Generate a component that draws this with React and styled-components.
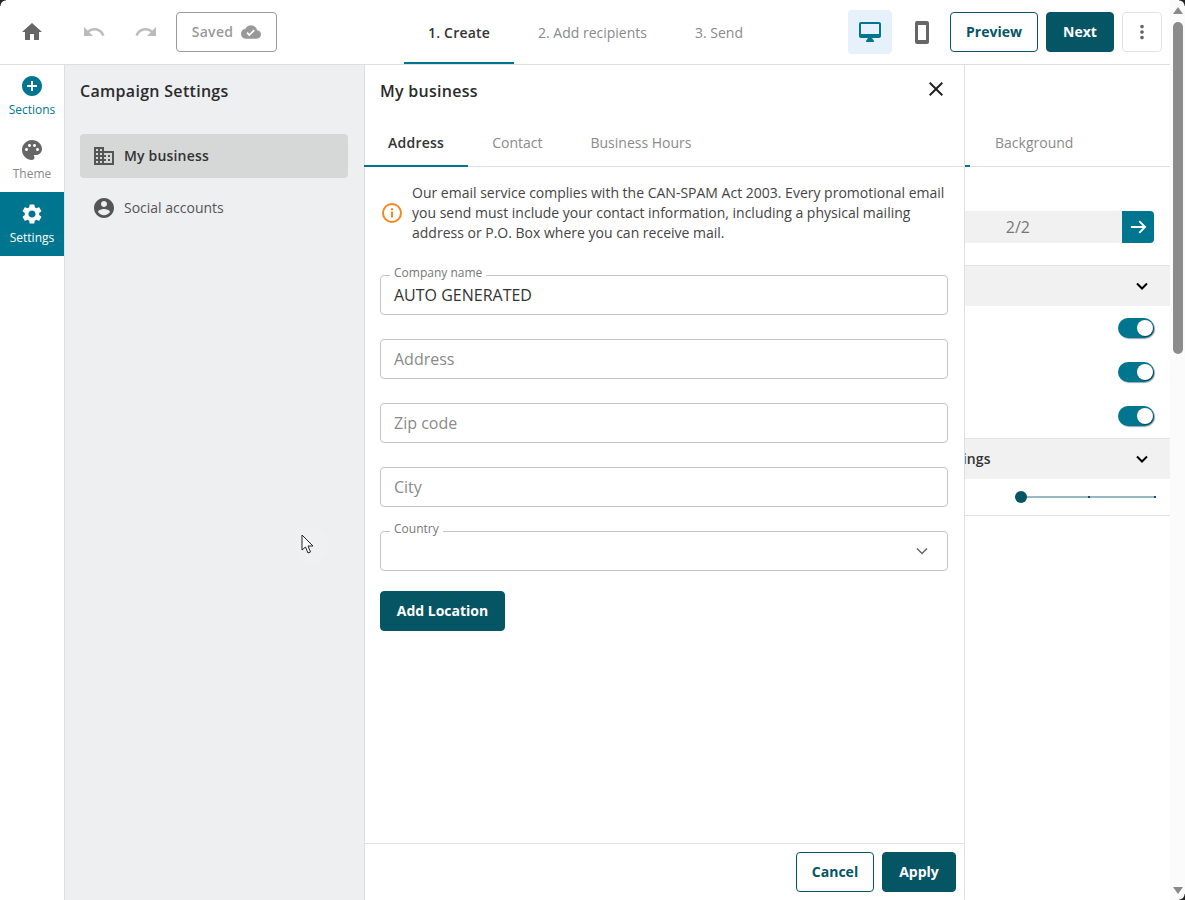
import React from "react";
import styled, { createGlobalStyle } from "styled-components";

const teal = "#00758f";
const dark = "#055565";

const GlobalStyle = createGlobalStyle`
  html, body {
    margin: 0;
    padding: 0;
    height: 100%;
    overflow: hidden;
    background: #fff;
  }
  * { box-sizing: border-box; }
  body {
    font-family: "Open Sans", "Liberation Sans", sans-serif;
    color: #333;
  }
`;

function Svg({ size = 24, vb = "0 0 24 24", color = "currentColor", children }) {
  return (
    <svg width={size} height={size} viewBox={vb} fill={color} style={{ display: "block" }}>
      {children}
    </svg>
  );
}

const HomeIcon = () => <Svg><path d="M10 20v-6h4v6h5v-8h3L12 3 2 12h3v8z" /></Svg>;
const UndoIcon = () => <Svg><path d="M12.5 8c-2.65 0-5.05.99-6.9 2.6L2 7v9h9l-3.62-3.62c1.39-1.16 3.16-1.88 5.12-1.88 3.54 0 6.55 2.31 7.6 5.5l2.37-.78C21.08 11.03 17.15 8 12.5 8z" /></Svg>;
const RedoIcon = () => <Svg><path d="M18.4 10.6C16.55 8.99 14.15 8 11.5 8c-4.65 0-8.58 3.03-9.96 7.22L3.9 16c1.05-3.19 4.05-5.5 7.6-5.5 1.95 0 3.73.72 5.12 1.88L13 16h9V7l-3.6 3.6z" /></Svg>;
const CloudIcon = () => <Svg size={20}><path d="M19.35 10.04C18.67 6.59 15.64 4 12 4 9.11 4 6.6 5.64 5.35 8.04 2.34 8.36 0 10.91 0 14c0 3.31 2.69 6 6 6h13c2.76 0 5-2.24 5-5 0-2.64-2.05-4.78-4.65-4.96zM10 17l-3.5-3.5 1.41-1.41L10 14.17l5.18-5.18 1.41 1.41L10 17z" /></Svg>;
const MonitorIcon = () => <Svg><path d="M21 2H3c-1.1 0-2 .9-2 2v12c0 1.1.9 2 2 2h7l-2 3v1h8v-1l-2-3h7c1.1 0 2-.9 2-2V4c0-1.1-.9-2-2-2zm0 12H3V4h18v10z" /></Svg>;
const PhoneIcon = () => (
  <svg width="14" height="23" viewBox="0 0 14 23" fill="currentColor" fillRule="evenodd" style={{ display: "block" }}>
    <path d="M2 0h10a2 2 0 0 1 2 2v19a2 2 0 0 1-2 2H2a2 2 0 0 1-2-2V2a2 2 0 0 1 2-2zm1 4v15h8V4z" />
  </svg>
);
const DotsIcon = () => <Svg size={22}><path d="M12 8c1.1 0 2-.9 2-2s-.9-2-2-2-2 .9-2 2 .9 2 2 2zm0 2c-1.1 0-2 .9-2 2s.9 2 2 2 2-.9 2-2-.9-2-2-2zm0 6c-1.1 0-2 .9-2 2s.9 2 2 2 2-.9 2-2-.9-2-2-2z" /></Svg>;
const PlusCircleIcon = () => <Svg><path d="M12 2C6.48 2 2 6.48 2 12s4.48 10 10 10 10-4.48 10-10S17.52 2 12 2zm5 11h-4v4h-2v-4H7v-2h4V7h2v4h4v2z" /></Svg>;
const PaletteIcon = () => <Svg><path d="M12 2C6.49 2 2 6.49 2 12s4.49 10 10 10c1.38 0 2.5-1.12 2.5-2.5 0-.61-.23-1.2-.64-1.67-.08-.1-.13-.21-.13-.33 0-.28.22-.5.5-.5H16c3.31 0 6-2.69 6-6 0-4.96-4.49-9-10-9zm5.5 11c-.83 0-1.5-.67-1.5-1.5s.67-1.5 1.5-1.5 1.5.67 1.5 1.5-.67 1.5-1.5 1.5zm-3-4C13.67 9 13 8.33 13 7.5S13.67 6 14.5 6s1.5.67 1.5 1.5S15.33 9 14.5 9zM5 11.5C5 10.67 5.67 10 6.5 10s1.5.67 1.5 1.5S7.33 13 6.5 13 5 12.33 5 11.5zm6-4c0 .83-.67 1.5-1.5 1.5S8 8.33 8 7.5 8.67 6 9.5 6s1.5.67 1.5 1.5z" /></Svg>;
const GearIcon = () => <Svg><path d="M19.14 12.94c.04-.3.06-.61.06-.94 0-.32-.02-.64-.07-.94l2.03-1.58a.49.49 0 0 0 .12-.61l-1.92-3.32a.488.488 0 0 0-.59-.22l-2.39.96c-.5-.38-1.03-.7-1.62-.94l-.36-2.54a.484.484 0 0 0-.48-.41h-3.84c-.24 0-.43.17-.47.41l-.36 2.54c-.59.24-1.13.57-1.62.94l-2.39-.96c-.22-.08-.47 0-.59.22L2.74 8.87c-.12.21-.08.47.12.61l2.03 1.58c-.05.3-.09.63-.09.94s.02.64.07.94l-2.03 1.58a.49.49 0 0 0-.12.61l1.92 3.32c.12.22.37.29.59.22l2.39-.96c.5.38 1.03.7 1.62.94l.36 2.54c.05.24.24.41.48.41h3.84c.24 0 .44-.17.47-.41l.36-2.54c.59-.24 1.13-.56 1.62-.94l2.39.96c.22.08.47 0 .59-.22l1.92-3.32c.12-.22.07-.47-.12-.61l-2.01-1.58zM12 15.6c-1.98 0-3.6-1.62-3.6-3.6s1.62-3.6 3.6-3.6 3.6 1.62 3.6 3.6-1.62 3.6-3.6 3.6z" /></Svg>;
const BuildingIcon = () => <Svg><path d="M12 7V3H2v18h20V7H12zM6 19H4v-2h2v2zm0-4H4v-2h2v2zm0-4H4V9h2v2zm0-4H4V5h2v2zm4 12H8v-2h2v2zm0-4H8v-2h2v2zm0-4H8V9h2v2zm0-4H8V5h2v2zm10 12h-8v-2h2v-2h-2v-2h2v-2h-2V9h8v10zm-2-8h-2v2h2v-2zm0 4h-2v2h2v-2z" /></Svg>;
const AccountIcon = () => <Svg><path d="M12 2C6.48 2 2 6.48 2 12s4.48 10 10 10 10-4.48 10-10S17.52 2 12 2zm0 3c1.66 0 3 1.34 3 3s-1.34 3-3 3-3-1.34-3-3 1.34-3 3-3zm0 14.2c-2.5 0-4.71-1.28-6-3.22.03-1.99 4-3.08 6-3.08 1.99 0 5.97 1.09 6 3.08-1.29 1.94-3.5 3.22-6 3.22z" /></Svg>;
const CloseIcon = () => <Svg size={24}><path d="M19 6.41 17.59 5 12 10.59 6.41 5 5 6.41 10.59 12 5 17.59 6.41 19 12 13.41 17.59 19 19 17.59 13.41 12z" /></Svg>;
const ChevronIcon = ({ size = 20, weight = 2.4 }) => (
  <svg width={size} height={size} viewBox="0 0 24 24" fill="none" stroke="currentColor" strokeWidth={weight} style={{ display: "block" }}>
    <path d="M6 9l6 6 6-6" />
  </svg>
);
const ArrowIcon = () => (
  <svg width="20" height="20" viewBox="0 0 24 24" fill="none" stroke="currentColor" strokeWidth="2.2" style={{ display: "block" }}>
    <path d="M3.5 12h17M13.5 5l7 7-7 7" />
  </svg>
);
const InfoIcon = () => (
  <svg width="22" height="22" viewBox="0 0 22 22" fill="none" style={{ display: "block", flex: "none", marginLeft: 1 }}>
    <circle cx="11" cy="11" r="9" stroke="#f5871f" strokeWidth="2" />
    <rect x="10" y="9.5" width="2" height="6" fill="#f5871f" />
    <rect x="10" y="6.3" width="2" height="2" fill="#f5871f" />
  </svg>
);

const Page = styled.div`
  position: relative;
  display: flex;
  width: 1185px;
  height: 900px;
  overflow: hidden;
`;
const Main = styled.div`
  width: 1170px;
  display: flex;
  flex-direction: column;
`;
const TopBar = styled.header`
  height: 65px;
  flex: none;
  display: flex;
  align-items: center;
  border-bottom: 1px solid #dedfe0;
`;
const TopLeft = styled.div`
  width: 404px;
  display: flex;
  align-items: center;
  padding-left: 20px;
`;
const IconSlot = styled.span`
  display: flex;
  color: ${(p) => p.$color || "#666"};
  margin-right: ${(p) => p.$mr || 0}px;
`;
const SavedBox = styled.div`
  width: 101px;
  height: 40px;
  margin-left: 18px;
  border: 1px solid #999;
  border-radius: 4px;
  display: flex;
  align-items: center;
  justify-content: center;
  gap: 8px;
  font-size: 14px;
  font-weight: 600;
  letter-spacing: 0.3px;
  color: #999;
`;
const SavedLabel = styled.span`
  padding-bottom: 2px;
`;
const Steps = styled.nav`
  display: flex;
  height: 64px;
`;
const Step = styled.div`
  height: 64px;
  padding: 2px 24px 0;
  display: flex;
  align-items: center;
  font-size: 14px;
  font-weight: ${(p) => (p.$active ? 600 : 400)};
  letter-spacing: ${(p) => (p.$active ? "0.2px" : "0")};
  color: ${(p) => (p.$active ? "#333" : "#8a8a8a")};
  border-bottom: 2px solid ${(p) => (p.$active ? teal : "transparent")};
`;
const TopRight = styled.div`
  margin-left: auto;
  display: flex;
  align-items: center;
  padding-right: 8px;
`;
const DeviceButton = styled.div`
  width: 44px;
  height: 44px;
  margin: 0 ${(p) => p.$mr || 0}px 0 ${(p) => p.$ml || 0}px;
  border-radius: 4px;
  display: flex;
  align-items: center;
  justify-content: center;
  color: ${(p) => (p.$active ? teal : "#666")};
  background: ${(p) => (p.$active ? "#e6f1fb" : "transparent")};
`;
const Button = styled.button`
  height: 40px;
  width: ${(p) => p.$w}px;
  margin-left: ${(p) => p.$ml || 0}px;
  padding: 0 0 2px;
  flex: none;
  font-family: inherit;
  font-size: 14px;
  font-weight: 700;
  border-radius: 4px;
  border: 1px solid ${dark};
  color: ${(p) => (p.$primary ? "#fff" : dark)};
  background: ${(p) => (p.$primary ? dark : "#fff")};
`;
const MoreButton = styled.div`
  width: 40px;
  height: 40px;
  margin-left: 8px;
  border: 1px solid #e3e3e3;
  border-radius: 4px;
  display: flex;
  align-items: center;
  justify-content: center;
  color: #666;
`;
const Workspace = styled.div`
  position: relative;
  flex: 1;
  display: flex;
  min-height: 0;
`;
const Rail = styled.aside`
  width: 65px;
  flex: none;
  border-right: 1px solid #dedfe0;
`;
const RailItem = styled.div`
  height: 64px;
  width: 64px;
  display: flex;
  flex-direction: column;
  align-items: center;
  padding-top: 10px;
  margin-top: ${(p) => (p.$first ? "-1px" : "0")};
  font-size: 12px;
  line-height: 17px;
  gap: 3px;
  color: ${(p) => (p.$active ? "#fff" : p.$accent ? teal : "#888")};
  background: ${(p) => (p.$active ? teal : "transparent")};
`;
const RailIcon = styled.span`
  display: flex;
  color: ${(p) => p.$color};
`;
const Drawer = styled.div`
  position: absolute;
  top: 0;
  bottom: 0;
  left: 65px;
  width: 900px;
  display: flex;
  background: #fff;
  z-index: 2;
`;
const SettingsColumn = styled.div`
  width: 300px;
  flex: none;
  background: #eeeff1;
  border-right: 1px solid #dedfe0;
  padding: 0 16px 0 15px;
`;
const ColumnTitle = styled.h2`
  margin: 0;
  padding-top: 15px;
  font-size: 16px;
  line-height: 22px;
  font-weight: 600;
  letter-spacing: 0.3px;
  color: #2b2b2b;
`;
const MenuList = styled.div`
  margin-top: 32px;
  display: flex;
  flex-direction: column;
  gap: 8px;
`;
const MenuItem = styled.div`
  height: 44px;
  display: flex;
  align-items: center;
  gap: 8px;
  padding-left: 12px;
  border-radius: 4px;
  font-size: 14px;
  font-weight: ${(p) => (p.$active ? 600 : 400)};
  letter-spacing: ${(p) => (p.$active ? "0.18px" : "0")};
  color: ${(p) => (p.$active ? "#333" : "#555")};
  background: ${(p) => (p.$active ? "#d6d8d8" : "transparent")};
  & svg { color: #555; }
`;
const MenuLabel = styled.span`
  padding-bottom: 2px;
`;
const FormColumn = styled.div`
  flex: 1;
  min-width: 0;
  display: flex;
  flex-direction: column;
  border-right: 1px solid #dedfe0;
`;
const FormHeader = styled.div`
  height: 55px;
  flex: none;
  display: flex;
  justify-content: space-between;
  padding: 12px 16px 0 15px;
`;
const FormTitle = styled.h2`
  margin: 0;
  padding-top: 3px;
  font-size: 16px;
  line-height: 22px;
  font-weight: 600;
  letter-spacing: 0.27px;
  color: #2b2b2b;
`;
const CloseSlot = styled.span`
  color: #222;
`;
const Tabs = styled.div`
  display: flex;
  height: 47px;
  flex: none;
  margin-left: -1px;
  border-bottom: 1px solid #dedfe0;
  font-size: 14px;
`;
const Tab = styled.div`
  height: 47px;
  padding: 0 24px;
  display: flex;
  align-items: center;
  font-weight: ${(p) => (p.$active ? 600 : 400)};
  letter-spacing: ${(p) => (p.$active ? "0.25px" : "0")};
  color: ${(p) => (p.$active ? "#333" : "#8a8a8a")};
  border-bottom: 2px solid ${(p) => (p.$active ? teal : "transparent")};
`;
const FormBody = styled.div`
  flex: 1;
  padding: 16px 16px 0 15px;
`;
const Notice = styled.div`
  display: flex;
  align-items: center;
  gap: 9px;
  font-size: 14px;
  line-height: 20px;
  color: #444;
`;
const Field = styled.div`
  position: relative;
  height: 40px;
  margin-top: ${(p) => p.$mt || 24}px;
  border: 1px solid #c4c4c4;
  border-radius: 4px;
  display: flex;
  align-items: center;
  padding: 0 13px;
  font-size: 16px;
  color: ${(p) => (p.$filled ? "#333" : "#8a8a8a")};
`;
const FloatLabel = styled.span`
  position: absolute;
  top: -11px;
  left: 9px;
  padding: 0 4px;
  background: #fff;
  font-size: 12px;
  line-height: 16px;
  color: #777;
`;
const SelectArrow = styled.span`
  margin-left: auto;
  margin-right: 2px;
  color: #666;
`;
const AddButton = styled(Button)`
  display: block;
  margin-top: 20px;
`;
const FormFooter = styled.div`
  height: 57px;
  flex: none;
  border-top: 1px solid #e3e3e3;
  display: flex;
  justify-content: flex-end;
  align-items: flex-start;
  padding: 8px 8px 0 0;
  gap: 8px;
`;
const EditorPanel = styled.div`
  margin-left: auto;
  width: 305px;
  flex: none;
  display: flex;
  flex-direction: column;
`;
const EditorTabs = styled(Tabs)`
  margin: 55px 0 0;
`;
const EditorTab = styled(Tab)`
  width: ${(p) => p.$w}px;
  padding: 0 0 0 25px;
  flex: none;
`;
const Pager = styled.div`
  margin: 44px 16px 0 0;
  height: 32px;
  display: flex;
  align-items: center;
  justify-content: flex-end;
  background: #f1f1f1;
  border-radius: 4px;
  font-size: 16px;
  color: #777;
`;
const PagerText = styled.span`
  margin-right: 92px;
`;
const PagerNext = styled.span`
  width: 32px;
  height: 32px;
  display: flex;
  align-items: center;
  justify-content: center;
  color: #fff;
  background: ${teal};
  border-radius: 0 4px 4px 0;
`;
const SectionHead = styled.div`
  margin-top: ${(p) => p.$mt || 0}px;
  height: 41px;
  flex: none;
  display: flex;
  align-items: center;
  justify-content: space-between;
  padding-right: 18px;
  background: #f1f1f1;
  border-top: 1px solid #e3e3e3;
  font-size: 14px;
  font-weight: 600;
  letter-spacing: 0.15px;
  color: #000;
`;
const SectionLabel = styled.span`
  color: #333;
  padding-bottom: 2px;
`;
const ToggleList = styled.div`
  display: flex;
  flex-direction: column;
  gap: 24px;
  padding: 12px 16px 12px 0;
  align-items: flex-end;
`;
const Toggle = styled.span`
  display: block;
  position: relative;
  width: 36px;
  height: 20px;
  border-radius: 10px;
  background: ${teal};
  box-shadow: 1px 1px 1px rgba(0, 60, 75, 0.45);
  &::after {
    content: "";
    position: absolute;
    top: 2px;
    right: 1px;
    width: 16px;
    height: 16px;
    border-radius: 50%;
    background: #fff;
    box-shadow: 1px 1px 1px rgba(0, 40, 50, 0.6);
  }
`;
const SliderRow = styled.div`
  height: 37px;
  flex: none;
  display: flex;
  align-items: center;
  justify-content: flex-end;
  padding-right: 14px;
  border-bottom: 1px solid #e3e3e3;
`;
const SliderTrack = styled.div`
  position: relative;
  width: 141px;
  height: 2px;
  background: #97b9c1;
`;
const SliderThumb = styled.span`
  position: absolute;
  left: 0;
  top: -5px;
  width: 12px;
  height: 12px;
  border-radius: 50%;
  background: ${dark};
`;
const SliderTick = styled.span`
  position: absolute;
  top: 0;
  left: ${(p) => p.$left}px;
  width: 2px;
  height: 2px;
  background: ${dark};
`;
const ScrollBar = styled.div`
  width: 15px;
  flex: none;
  display: flex;
  flex-direction: column;
  align-items: center;
  background: #fbfbfb;
`;
const ScrollArrow = styled.span`
  width: 0;
  height: 0;
  margin: ${(p) => (p.$down ? "auto 0 6px" : "7px 0 0")};
  border-left: 5px solid transparent;
  border-right: 5px solid transparent;
  ${(p) => (p.$down ? "border-top: 7px solid #8a8a8a;" : "border-bottom: 7px solid #8a8a8a;")}
`;
const ScrollThumb = styled.span`
  width: 10px;
  height: 332px;
  margin-top: 8px;
  border-radius: 5px;
  background: #8c8c8c;
`;
const Pointer = styled.div`
  position: absolute;
  left: 294px;
  top: 527px;
  width: 36px;
  height: 36px;
  z-index: 5;
  border-radius: 50%;
  background: rgba(241, 242, 244, 0.3);
  padding: 7px 0 0 7px;
`;
const Corner = styled.span`
  position: absolute;
  width: 6px;
  height: 6px;
  z-index: 6;
  ${(p) => (p.$bottom ? "bottom: 0;" : "top: 0;")}
  ${(p) => (p.$left ? "left: 0;" : "right: 0;")}
  background: radial-gradient(
    circle at ${(p) => (p.$left ? "100%" : "0")} ${(p) => (p.$bottom ? "0" : "100%")},
    transparent 5px,
    #222 6px
  );
`;

export default function App() {
  return (
    <>
      <GlobalStyle />
      <Page>
        <Main>
          <TopBar>
            <TopLeft>
              <IconSlot $mr={38}><HomeIcon /></IconSlot>
              <IconSlot $color="#bbb" $mr={28}><UndoIcon /></IconSlot>
              <IconSlot $color="#bbb"><RedoIcon /></IconSlot>
              <SavedBox>
                <SavedLabel>Saved</SavedLabel>
                <IconSlot $color="#999"><CloudIcon /></IconSlot>
              </SavedBox>
            </TopLeft>
            <Steps>
              <Step $active>1. Create</Step>
              <Step>2. Add recipients</Step>
              <Step>3. Send</Step>
            </Steps>
            <TopRight>
              <DeviceButton $active><MonitorIcon /></DeviceButton>
              <DeviceButton $ml={8} $mr={6}><PhoneIcon /></DeviceButton>
              <Button $w={88}>Preview</Button>
              <Button $w={68} $ml={8} $primary>Next</Button>
              <MoreButton><DotsIcon /></MoreButton>
            </TopRight>
          </TopBar>
          <Workspace>
            <Rail>
              <RailItem $first $accent>
                <RailIcon><PlusCircleIcon /></RailIcon>
                Sections
              </RailItem>
              <RailItem>
                <RailIcon $color="#666"><PaletteIcon /></RailIcon>
                Theme
              </RailItem>
              <RailItem $active>
                <RailIcon><GearIcon /></RailIcon>
                Settings
              </RailItem>
            </Rail>
            <Drawer>
              <SettingsColumn>
                <ColumnTitle>Campaign Settings</ColumnTitle>
                <MenuList>
                  <MenuItem $active><BuildingIcon /><MenuLabel>My business</MenuLabel></MenuItem>
                  <MenuItem><AccountIcon /><MenuLabel>Social accounts</MenuLabel></MenuItem>
                </MenuList>
              </SettingsColumn>
              <FormColumn>
                <FormHeader>
                  <FormTitle>My business</FormTitle>
                  <CloseSlot><CloseIcon /></CloseSlot>
                </FormHeader>
                <Tabs>
                  <Tab $active>Address</Tab>
                  <Tab>Contact</Tab>
                  <Tab>Business Hours</Tab>
                </Tabs>
                <FormBody>
                  <Notice>
                    <InfoIcon />
                    <span>
                      Our email service complies with the CAN-SPAM Act 2003. Every promotional email
                      you send must include your contact information, including a physical mailing
                      address or P.O. Box where you can receive mail.
                    </span>
                  </Notice>
                  <Field $filled $mt={32}>
                    <FloatLabel>Company name</FloatLabel>
                    AUTO GENERATED
                  </Field>
                  <Field>Address</Field>
                  <Field>Zip code</Field>
                  <Field>City</Field>
                  <Field>
                    <FloatLabel>Country</FloatLabel>
                    <SelectArrow><ChevronIcon weight={1.8} /></SelectArrow>
                  </Field>
                  <AddButton $w={125} $primary>Add Location</AddButton>
                </FormBody>
                <FormFooter>
                  <Button $w={78}>Cancel</Button>
                  <Button $w={74} $primary>Apply</Button>
                </FormFooter>
              </FormColumn>
            </Drawer>
            <EditorPanel>
              <EditorTabs>
                <EditorTab $active $w={105}>Content</EditorTab>
                <EditorTab $w={150}>Background</EditorTab>
              </EditorTabs>
              <Pager>
                <PagerText>2/2</PagerText>
                <PagerNext><ArrowIcon /></PagerNext>
              </Pager>
              <SectionHead $mt={22}>
                <SectionLabel>Layout</SectionLabel>
                <ChevronIcon />
              </SectionHead>
              <ToggleList>
                <Toggle />
                <Toggle />
                <Toggle />
              </ToggleList>
              <SectionHead>
                <SectionLabel>Advanced settings</SectionLabel>
                <ChevronIcon />
              </SectionHead>
              <SliderRow>
                <SliderTrack>
                  <SliderTick $left={73} />
                  <SliderTick $left={139} />
                  <SliderThumb />
                </SliderTrack>
              </SliderRow>
            </EditorPanel>
          </Workspace>
        </Main>
        <ScrollBar>
          <ScrollArrow />
          <ScrollThumb />
          <ScrollArrow $down />
        </ScrollBar>
        <Pointer>
          <svg width="15" height="21" viewBox="0 0 15 21" fill="#fff" stroke="#222" strokeWidth="1" style={{ display: "block" }}>
            <path d="M1 1v15l3.5-3 2.5 6 2.5-1-2.5-6h5z" />
          </svg>
        </Pointer>
        <Corner $left />
        <Corner />
        <Corner $bottom />
      </Page>
    </>
  );
}
